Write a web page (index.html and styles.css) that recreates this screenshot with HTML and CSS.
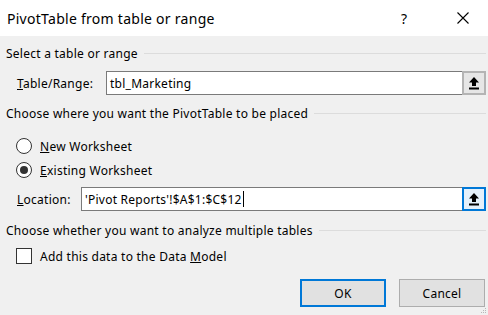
FILE: index.html
```html
<!DOCTYPE html>
<html>
<head>
<meta charset="utf-8">
<link rel="stylesheet" href="styles.css">
</head>
<body>
<div class="dialog">
  <div class="titlebar">
    <div class="title">PivotTable from table or range</div>
    <div class="help">?</div>
    <div class="close">
      <svg width="12" height="12" viewBox="0 0 12 12"><path d="M0.5 0.5 L11.5 11.5 M11.5 0.5 L0.5 11.5" stroke="#000" stroke-width="1.1" fill="none"/></svg>
    </div>
  </div>
  <div class="content">
    <div class="group g1"><span class="gtext">Select a table or range</span><span class="gline"></span></div>
    <div class="field f1">
      <label class="flabel lab1"><u>T</u>able/Range:</label>
      <div class="input">
        <span class="itext">tbl_Marketing</span>
        <span class="pick">
          <svg width="10" height="13" viewBox="0 0 10 13"><path d="M5 0 L0 5.5 L3 5.5 L3 9 L7 9 L7 5.5 L10 5.5 Z" fill="#000"/><rect x="0" y="10.5" width="10" height="2" fill="#000"/></svg>
        </span>
      </div>
    </div>
    <div class="group g2"><span class="gtext">Choose where you want the PivotTable to be placed</span><span class="gline"></span></div>
    <div class="option r1"><span class="radio"></span><span class="otext"><u>N</u>ew Worksheet</span></div>
    <div class="option r2"><span class="radio checked"><span class="dot"></span></span><span class="otext"><u>E</u>xisting Worksheet</span></div>
    <div class="field f2">
      <label class="flabel lab2"><u>L</u>ocation:</label>
      <div class="input">
        <span class="itext">'Pivot Reports'!$A$1:$C$12<span class="caret"></span></span>
        <span class="pick hot">
          <svg width="10" height="13" viewBox="0 0 10 13"><path d="M5 0 L0 5.5 L3 5.5 L3 9 L7 9 L7 5.5 L10 5.5 Z" fill="#000"/><rect x="0" y="10.5" width="10" height="2" fill="#000"/></svg>
        </span>
      </div>
    </div>
    <div class="group g3"><span class="gtext">Choose whether you want to analyze multiple tables</span><span class="gline"></span></div>
    <div class="option c1"><span class="check"></span><span class="otext">Add this data to the Data <u>M</u>odel</span></div>
    <div class="buttons">
      <button class="btn ok">OK</button>
      <button class="btn">Cancel</button>
    </div>
    <div class="grip">
      <svg width="6" height="6" viewBox="0 0 6 6" fill="#b8b8b8"><rect x="4" y="0" width="1" height="1"/><rect x="2" y="2" width="1" height="1"/><rect x="4" y="2" width="1" height="1"/><rect x="0" y="4" width="1" height="1"/><rect x="2" y="4" width="1" height="1"/><rect x="4" y="4" width="1" height="1"/></svg>
    </div>
  </div>
</div>
</body>
</html>
```
FILE: styles.css
```css
* { box-sizing: border-box; }
html, body { margin: 0; padding: 0; }
body {
  width: 488px;
  height: 315px;
  overflow: hidden;
  background: #f0f0f0;
  font-family: "Noto Sans", "Open Sans", sans-serif;
  color: #000;
}
.dialog { width: 488px; height: 315px; display: flex; flex-direction: column; }
.titlebar {
  height: 36px;
  background: #fff;
  display: flex;
  align-items: center;
  padding-left: 7px;
}
.title { font-size: 14px; flex: 1; letter-spacing: 0.27px; }
.help { font-size: 14px; width: 12px; margin-right: 44px; }
.close { width: 12px; height: 12px; margin-right: 19px; display: flex; }
.content {
  flex: 1;
  position: relative;
  padding: 0 2px 0 6px;
  font-size: 12px;
  letter-spacing: 0.25px;
}
.group { display: flex; height: 16px; line-height: 16px; }
.gtext { white-space: nowrap; }
.gline { flex: 1; border-top: 1px solid #dcdcdc; margin: 7px 0 0 6px; height: 0; }
.g1 { margin-top: 10px; }
.g2 { margin-top: 11px; }
.g3 { margin-top: 12px; }
.field { display: flex; align-items: center; height: 24px; }
.f1 { margin-top: 9px; }
.f2 { margin-top: 9px; }
.flabel { padding-left: 11px; white-space: nowrap; }
.lab1 { width: 100px; }
.lab2 { width: 75px; }
.input {
  flex: 1;
  height: 24px;
  background: #fff;
  border: 1px solid #7a7a7a;
  display: flex;
  align-items: center;
}
.itext { flex: 1; padding-left: 3px; white-space: nowrap; display: flex; align-items: center; }
.caret { display: inline-block; width: 1px; height: 16px; background: #000; margin-left: 1px; }
.pick {
  width: 24px;
  height: 24px;
  margin: -1px -1px -1px 0;
  border: 2px solid #b4b4b4;
  background: #e6e6e6;
  display: flex;
  align-items: center;
  justify-content: center;
}
.pick.hot { border: 2px solid #0078d7; background: #e5f1fb; }
.option { display: flex; align-items: center; height: 16px; padding-left: 10px; }
.r1 { margin-top: 16px; }
.r2 { margin-top: 8px; }
.c1 { margin-top: 9px; }
.radio {
  width: 16px; height: 16px;
  border: 1px solid #333;
  border-radius: 50%;
  background: #fff;
  display: flex; align-items: center; justify-content: center;
}
.dot { width: 8px; height: 8px; border-radius: 50%; background: #333; }
.check { width: 16px; height: 16px; border: 1px solid #333; background: #fff; }
.otext { margin-left: 8px; white-space: nowrap; }
.buttons { display: flex; justify-content: flex-end; gap: 13px; margin-top: 15px; padding-right: 1px; }
.btn {
  width: 86px; height: 28px;
  font-family: inherit; font-size: 12px;
  letter-spacing: 0.25px;
  background: #e1e1e1;
  border: 1px solid #adadad;
  color: #000;
  padding: 0;
}
.btn.ok { border: 2px solid #0078d7; }
.grip { position: absolute; right: 1px; bottom: 1px; width: 6px; height: 6px; display: flex; }
```
